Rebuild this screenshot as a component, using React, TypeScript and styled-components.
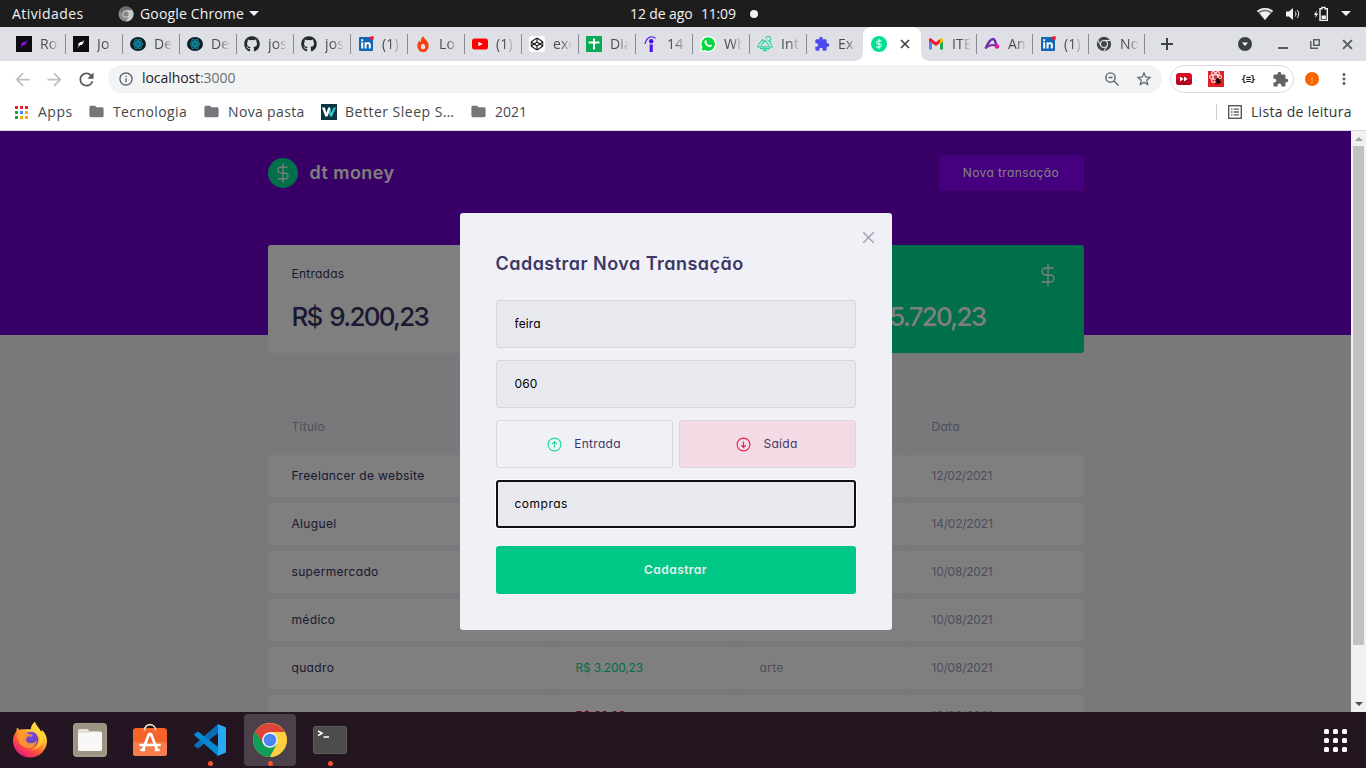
import React from 'react';
import styled, { createGlobalStyle, css } from 'styled-components';
import { FaGithub, FaCodepen } from 'react-icons/fa';
import {
  MdExtension,
  MdArrowBack,
  MdArrowForward,
  MdRefresh,
  MdInfoOutline,
  MdStarBorder,
  MdMoreVert,
  MdFolder,
} from 'react-icons/md';

const ubuntu = `'Open Sans', 'Noto Sans', sans-serif`;
const poppins = `Inter, 'Open Sans', sans-serif`;

const GlobalStyle = createGlobalStyle`
  * { margin: 0; padding: 0; box-sizing: border-box; }
  html, body, #root { height: 100%; overflow: hidden; }
  body { background: #fff; }
  svg { display: block; flex: none; }
  button, input { font: inherit; letter-spacing: inherit; border: 0; background: none; }
`;

const Desktop = styled.div`
  width: 1366px;
  height: 768px;
  display: flex;
  flex-direction: column;
  font-family: ${ubuntu};
  overflow: hidden;
`;

/* ---------- system bar ---------- */

const SystemBar = styled.header`
  height: 27px;
  flex: none;
  display: grid;
  grid-template-columns: 630px 1fr auto;
  align-items: center;
  background: #1d1d1d;
  color: #f2f2f2;
  font-size: 14px;
  line-height: 27px;
`;

const SystemGroup = styled.div<{ $gap?: number; $left?: number; $right?: number }>`
  display: flex;
  align-items: center;
  height: 27px;
  gap: ${(p) => p.$gap ?? 0}px;
  padding-left: ${(p) => p.$left ?? 0}px;
  padding-right: ${(p) => p.$right ?? 0}px;
`;

const Label = styled.span<{ $w: number; $ls?: number }>`
  width: ${(p) => p.$w}px;
  letter-spacing: ${(p) => p.$ls ?? 0}px;
  white-space: nowrap;
  flex: none;
`;

const Caret = styled.i`
  border: 5px solid transparent;
  border-top-color: #f2f2f2;
  border-bottom: 0;
`;

const NoticeDot = styled.i`
  width: 8px;
  height: 8px;
  border-radius: 50%;
  background: #f2f2f2;
  margin-left: 14px;
`;

/* ---------- tabs ---------- */

const TabStrip = styled.nav`
  height: 34px;
  flex: none;
  display: flex;
  align-items: center;
  padding-left: 9px;
  background: #dee0e6;
  color: #4a4c50;
  font-size: 14px;
`;

const TabItem = styled.div<{ $narrow?: boolean; $last?: boolean }>`
  width: ${(p) => (p.$narrow ? 56 : 57)}px;
  height: 20px;
  flex: none;
  display: flex;
  align-items: center;
  padding-left: 7px;
  border-right: 1px solid ${(p) => (p.$last ? 'transparent' : '#888a8f')};
`;

const TabTitle = styled.span`
  margin-left: 8px;
  width: 18px;
  overflow: hidden;
  white-space: nowrap;
  line-height: 20px;
  letter-spacing: 0.2px;
  mask-image: linear-gradient(90deg, #000 45%, transparent 105%);
`;

const flare = css`
  content: '';
  position: absolute;
  bottom: 0;
  width: 8px;
  height: 8px;
`;

const ActiveTab = styled.div`
  position: relative;
  width: 58px;
  height: 34px;
  margin-left: -1px;
  flex: none;
  display: flex;
  align-items: center;
  justify-content: space-between;
  padding: 0 11px 0 8px;
  background: #fff;
  border-radius: 8px 8px 0 0;
  &::before {
    ${flare}
    left: -8px;
    background: radial-gradient(circle at 0 0, transparent 7.5px, #fff 8px);
  }
  &::after {
    ${flare}
    right: -8px;
    background: radial-gradient(circle at 100% 0, transparent 7.5px, #fff 8px);
  }
`;

const WindowControls = styled.div`
  margin-left: auto;
  display: flex;
  align-items: center;
  padding-right: 13px;
  gap: 22px;
  svg:first-child {
    margin-right: 4px;
  }
`;

const NewTab = styled.div`
  margin-left: 16px;
`;

/* ---------- toolbar ---------- */

const Toolbar = styled.div`
  height: 36px;
  flex: none;
  display: flex;
  align-items: center;
  padding-left: 12px;
  background: #fff;
  color: #5f6368;
`;

const NavButtons = styled.div`
  display: flex;
  align-items: center;
  gap: 11px;
  width: 96px;
`;

const AddressBar = styled.div`
  width: 1054px;
  height: 28px;
  border-radius: 14px;
  background: #f1f3f4;
  display: flex;
  align-items: center;
  padding: 0 9px 0 10px;
`;

const Url = styled.span`
  margin-left: 8px;
  flex: 1;
  font-size: 14px;
  line-height: 26px;
  padding-bottom: 2px;
  letter-spacing: -0.07px;
  color: #6b6e73;
  b {
    font-weight: 400;
    color: #202124;
  }
`;

const Extensions = styled.div`
  margin-left: 8px;
  width: 124px;
  height: 28px;
  border: 1px solid #dadce0;
  border-radius: 14px;
  display: flex;
  align-items: center;
  justify-content: space-between;
  padding: 0 4px 0 5px;
`;

const CodeBadge = styled.span`
  width: 16px;
  text-align: center;
  font: bold 9px 'DejaVu Sans Mono', monospace;
  letter-spacing: -0.8px;
  color: #222;
`;

const Avatar = styled.span`
  margin-left: 11px;
  width: 14px;
  height: 14px;
  border-radius: 50%;
  background: #f96302;
  color: #ffd2b0;
  font-size: 8px;
  line-height: 13px;
  text-align: center;
`;

const MenuDots = styled.div`
  margin-left: 16px;
`;

/* ---------- bookmarks ---------- */

const Bookmarks = styled.div`
  height: 34px;
  flex: none;
  display: flex;
  align-items: center;
  padding: 0 14px 4px;
  background: #fff;
  border-bottom: 1px solid #d7d9dc;
  color: #45474b;
  font-size: 14px;
  line-height: 30px;
`;

const Bookmark = styled.div<{ $w: number; $gap: number }>`
  display: flex;
  align-items: center;
  width: ${(p) => p.$w}px;
  gap: ${(p) => p.$gap}px;
  flex: none;
  white-space: nowrap;
`;

const ReadingList = styled.div`
  margin-left: auto;
  display: flex;
  align-items: center;
  height: 16px;
  padding-left: 11px;
  gap: 9px;
  border-left: 1px solid #c9cbce;
  color: #333539;
`;

/* ---------- page ---------- */

const Viewport = styled.main`
  height: 581px;
  flex: none;
  display: flex;
  overflow: hidden;
`;

const Page = styled.div`
  position: relative;
  width: 1351px;
  height: 581px;
  overflow: hidden;
  background: #f0f2f5;
  font-family: ${poppins};
  font-feature-settings: 'cv11';
  font-size: 12px;
  color: #3c3865;
`;

const Hero = styled.header`
  height: 204px;
  background: #7000cc;
`;

const HeroInner = styled.div`
  width: 816px;
  margin: 0 auto;
  padding-top: 24px;
  display: flex;
  align-items: center;
  justify-content: space-between;
`;

const Brand = styled.div`
  display: flex;
  align-items: center;
  gap: 12px;
  color: #fff;
  font-size: 18px;
  line-height: 28px;
  font-weight: 600;
  letter-spacing: 0.45px;
`;

const BrandMark = styled.div`
  width: 30px;
  height: 30px;
  border-radius: 50%;
  display: grid;
  place-items: center;
  background: #00de94;
`;

const NewButton = styled.button`
  width: 145px;
  height: 36px;
  padding-bottom: 2px;
  border-radius: 3px;
  background: #8a00ff;
  color: #fff;
  letter-spacing: 0.38px;
`;

const Content = styled.section`
  width: 816px;
  margin: -90px auto 0;
  position: relative;
`;

const Summary = styled.div`
  display: grid;
  grid-template-columns: repeat(3, 1fr);
  gap: 24px;
`;

const Card = styled.article<{ $accent?: boolean }>`
  height: 108px;
  padding: 18px 24px;
  border-radius: 3px;
  background: ${(p) => (p.$accent ? '#00de94' : '#fff')};
  color: ${(p) => (p.$accent ? '#fff' : '#363165')};
`;

const CardHead = styled.header`
  height: 24px;
  display: flex;
  align-items: center;
  justify-content: space-between;
  line-height: 22px;
  letter-spacing: 0.24px;
  span {
    padding-bottom: 2px;
  }
`;

const CardValue = styled.strong`
  display: block;
  margin-top: 9px;
  font-size: 26px;
  line-height: 41px;
  font-weight: 500;
  letter-spacing: -1.75px;
  word-spacing: 2.5px;
  white-space: nowrap;
`;

const Table = styled.div`
  margin-top: 48px;
  display: flex;
  flex-direction: column;
  gap: 6px;
`;

const Row = styled.div<{ $head?: boolean }>`
  display: grid;
  grid-template-columns: 284px 184px 172px 176px;
  height: ${(p) => (p.$head ? 48 : 42)}px;
  color: #a09cb8;
`;

const Cell = styled.div<{ $tone?: 'title' | 'in' | 'out' | 'date'; $head?: boolean }>`
  display: flex;
  align-items: center;
  padding: ${(p) => (p.$head ? '3px 0 0 24px' : '0 0 2px 24px')};
  border-radius: 3px;
  background: ${(p) => (p.$head ? 'none' : '#fff')};
  letter-spacing: ${(p) => (p.$tone === 'title' ? 0.34 : p.$tone ? -0.22 : 0.3)}px;
  ${(p) => p.$tone === 'title' && 'color: #363165;'}
  ${(p) => p.$tone === 'in' && 'color: #00de94;'}
  ${(p) => p.$tone === 'out' && 'color: #e5004c;'}
`;

/* ---------- modal ---------- */

const Overlay = styled.div`
  position: absolute;
  inset: 0;
  display: flex;
  align-items: center;
  justify-content: center;
  background: rgba(0, 0, 0, 0.5);
`;

const Dialog = styled.form`
  position: relative;
  width: 432px;
  height: 417px;
  padding: 36px;
  border-radius: 3px;
  background: #f0f1f6;
  display: flex;
  flex-direction: column;
`;

const CloseButton = styled.button`
  position: absolute;
  right: 17px;
  top: 17.5px;
  color: #a09fae;
`;

const DialogTitle = styled.h2`
  height: 27px;
  margin-bottom: 24px;
  font-size: 18px;
  line-height: 29px;
  font-weight: 600;
  letter-spacing: 0.47px;
  white-space: nowrap;
`;

const Field = styled.input<{ $focused?: boolean; $ls?: number }>`
  height: 48px;
  flex: none;
  margin-bottom: ${(p) => (p.$focused ? 18 : 12)}px;
  padding: 0 ${(p) => (p.$focused ? 17 : 18)}px 2px;
  border-radius: 3px;
  border: ${(p) => (p.$focused ? '2px solid #101010' : '1px solid #d7d7d7')};
  box-shadow: ${(p) => (p.$focused ? '0 0 0 1px #fff' : 'none')};
  background: #e7e9ee;
  color: #000;
  outline: none;
  font-family: ${poppins};
  font-feature-settings: 'cv11';
  letter-spacing: ${(p) => p.$ls ?? 0.1}px;
`;

const TypeGroup = styled.div`
  display: grid;
  grid-template-columns: 1fr 1fr;
  gap: 6px;
  margin-bottom: 12px;
`;

const TypeButton = styled.button<{ $picked?: boolean }>`
  height: 48px;
  display: flex;
  align-items: center;
  justify-content: center;
  gap: 12px;
  border: 1px solid #d7d7d7;
  border-radius: 3px;
  background: ${(p) => (p.$picked ? '#f4dae4' : 'transparent')};
  color: #3c3865;
  letter-spacing: 0.3px;
  span {
    padding-bottom: 2px;
  }
`;

const Submit = styled.button`
  height: 48px;
  padding-bottom: 2px;
  border-radius: 3px;
  background: #00c785;
  color: #e4f0ec;
  font-weight: 600;
  letter-spacing: 0.45px;
`;

/* ---------- scrollbar ---------- */

const Scrollbar = styled.div`
  width: 15px;
  background: #f1f1f1;
  display: flex;
  flex-direction: column;
  align-items: center;
`;

const ScrollArrow = styled.i<{ $up?: boolean }>`
  width: 0;
  margin: ${(p) => (p.$up ? '6px 0 5px' : 'auto 0 6px')};
  border: 4px solid transparent;
  ${(p) =>
    p.$up
      ? 'border-top: 0; border-bottom-color: #a3a3a3;'
      : 'border-bottom: 0; border-top-color: #505050;'}
`;

const Thumb = styled.div`
  width: 11px;
  height: 499px;
  background: #c1c1c1;
`;

/* ---------- dock ---------- */

const DockBar = styled.footer`
  height: 56px;
  flex: none;
  display: flex;
  align-items: center;
  gap: 8px;
  padding: 0 15px 0 4px;
  background: linear-gradient(90deg, #231521, #22151f);
`;

const DockItem = styled.div<{ $active?: boolean; $running?: boolean }>`
  position: relative;
  width: 52px;
  height: 52px;
  border-radius: 4px;
  display: grid;
  place-items: center;
  background: ${(p) => (p.$active ? '#4c404a' : 'transparent')};
  ${(p) =>
    p.$running &&
    `&::after {
      content: '';
      position: absolute;
      left: 23.5px;
      bottom: 0;
      width: 5px;
      height: 5px;
      border-radius: 50%;
      background: #f1562a;
    }`}
`;

const AppGrid = styled.div`
  margin-left: auto;
  display: grid;
  grid-template-columns: repeat(3, 5px);
  gap: 4px;
  padding-right: 4px;
  i {
    width: 5px;
    height: 5px;
    border-radius: 1.5px;
    background: #fff;
  }
`;

/* ---------- icons ---------- */

const Dollar = ({ size, width = 1.3 }: { size: number; width?: number }) => (
  <svg width={size} height={size} viewBox="0 0 24 24" fill="none" stroke="#fff" strokeWidth={width} strokeLinecap="round">
    <path d="M12 1v22M17 5H9.500a3.500 3.500 0 0 0 0 7h5a3.500 3.500 0 0 1 0 7H6" />
  </svg>
);

const MoneyFavicon = () => (
  <svg width="16" height="16" viewBox="0 0 16 16">
    <circle cx="8" cy="8" r="8" fill="#00de94" />
    <path d="M8 2.800v10.400M10.800 5H7a1.500 1.500 0 0 0 0 3h2a1.500 1.500 0 0 1 0 3H5.200" fill="none" stroke="#fff" strokeWidth="1" />
  </svg>
);

const Rocket = ({ color }: { color: string }) => (
  <svg width="16" height="16" viewBox="0 0 16 16">
    <rect width="16" height="16" fill="#0e0c12" />
    <path d="M11.500 4 10 7.600 8.300 9.300 7.400 9 4 12.600 5.900 9.200 4.800 8 7.500 6l2-.3z" fill={color} />
  </svg>
);

const ReactDisc = () => (
  <svg width="16" height="16" viewBox="0 0 16 16">
    <ellipse cx="8" cy="8" rx="8" ry="7" fill="#131b21" />
    <g fill="none" stroke="#0e8fa6" strokeWidth="1">
      <ellipse cx="8" cy="8" rx="5" ry="2" />
      <ellipse cx="8" cy="8" rx="5" ry="2" transform="rotate(60 8 8)" />
      <ellipse cx="8" cy="8" rx="5" ry="2" transform="rotate(120 8 8)" />
    </g>
    <circle cx="8" cy="8" r="3.800" fill="#087f95" opacity=".7" />
  </svg>
);

const LinkedIn = () => (
  <svg width="16" height="16" viewBox="0 0 16 16">
    <rect x="1" y="1" width="14" height="14" rx="1" fill="#1266b3" />
    <path d="M3.200 6.300h2v6.200h-2zM3.200 3.300h2v1.900h-2zM6.600 6.300h1.900v.9c.4-.6 1-1 2-1 1.700 0 2.300 1.100 2.300 2.800v3.500h-2V9.400c0-.9-.2-1.500-1-1.500s-1.200.6-1.200 1.500v3.100h-2z" fill="#fff" />
    <circle cx="14" cy="2" r="2" fill="#ff1633" />
  </svg>
);

const Flame = () => (
  <svg width="16" height="16" viewBox="0 0 16 16">
    <path
      fillRule="evenodd"
      d="M8.300 0c.2 2 1.400 2.900 3 4.300C12.800 5.700 13.600 7.500 13.600 9.700A5.600 5.900 0 0 1 8 16a5.600 5.900 0 0 1-5.600-6.300c0-2.300 1-4 2.200-5.200.1 1 .5 1.700 1.100 2C5.700 4 6.300 1.500 8.300 0ZM8 7.600c-1.500 1-2.300 2-2.300 3.400A2.300 2.400 0 0 0 8 13.400 2.300 2.400 0 0 0 10.300 11C10.300 9.600 9.500 8.600 8 7.600Z"
      fill="#fb3c0c"
    />
  </svg>
);

const YouTube = () => (
  <svg width="16" height="16" viewBox="0 0 16 16">
    <rect y="2.500" width="16" height="11" rx="2.500" fill="#f00" />
    <path d="M6.400 5.700v4.600L10.600 8z" fill="#fff" />
  </svg>
);

const CodePen = () => (
  <svg width="16" height="16" viewBox="0 0 16 16">
    <rect width="16" height="16" rx="2" fill="#fff" />
    <FaCodepen x="1.500" y="1.500" width="13" height="13" size={13} color="#111" />
  </svg>
);

const Sheet = () => (
  <svg width="16" height="16" viewBox="0 0 16 16">
    <rect width="16" height="16" rx="1" fill="#06ab52" />
    <path d="M7 2.500h2v3h4.500v2H9V13.500H7V7.500H2.500v-2H7z" fill="#fff" />
  </svg>
);

const Indeed = () => (
  <svg width="16" height="16" viewBox="0 0 16 16">
    <circle cx="8.200" cy="5.200" r="2.200" fill="#4a0cf0" />
    <path d="M6.700 8.200c1 .5 2 .4 3-.2V16h-3z" fill="#4a0cf0" />
    <path d="M2 8C3 2 8.500-1.500 12.600 2.400" fill="none" stroke="#4a0cf0" strokeWidth="1.100" />
  </svg>
);

const WhatsApp = () => (
  <svg width="16" height="16" viewBox="0 0 16 16">
    <path d="M8 0a8 8 0 1 1-3.800 15L0 16l1.200-4A8 8 0 0 1 8 0z" fill="#fff" />
    <path d="M8 1.200a6.800 6.800 0 1 1-3.300 12.700L1.600 14.600l.9-3A6.800 6.800 0 0 1 8 1.200z" fill="#00d83d" />
    <path d="M5.500 4.200c.6-.3.900.1 1.300 1.300.2.600-.6.900-.4 1.300.7 1.200 1.500 1.900 2.700 2.400.5.100.8-.9 1.200-.8 1.500.7 1.800.8 1.600 1.400-.5 1.400-1.700 1.600-3.100 1.100C6.600 10 5 8.300 4.500 6.700c-.3-1 .2-2.200 1-2.500z" fill="#fff" />
  </svg>
);

const Mountain = () => (
  <svg width="16" height="16" viewBox="0 0 16 16" fill="none" stroke="#27d19c" strokeWidth="1.100">
    <path d="M.8 9.500 5.500 3.700l2 2.600M4 9.500l4-5 4 5M8.700 2.500a2.600 2.600 0 1 1 3.800 2.800L15 9.500M10.500 3.500l1.200 2" />
    <path d="M0 10.800h16M3 12.700h10M6 14.500h4" strokeWidth="1.300" />
  </svg>
);

const Gmail = () => (
  <svg width="16" height="16" viewBox="0 0 16 16">
    <path d="M1 5v8.500h3V7z" fill="#4a86f5" />
    <path d="M15 5v8.500h-3V7z" fill="#20a758" />
    <path d="M1 5V3.500C1 2 2.500 2 3.500 2.700L8 6.200l4.200-3.400L13 6 8 10 1 5z" fill="#ef1a2d" />
    <path d="M12 3l.8-.5c1-.6 2.200-.2 2.200 1V5.400l-3 2.500z" fill="#fbbc04" />
  </svg>
);

const Arc = () => (
  <svg width="16" height="16" viewBox="0 0 16 16" fill="none">
    <path d="M1.500 12.500C4 7 6.500 3 9 3c2 0 2.500 3.500 3.500 6.500" stroke="#6b2bb0" strokeWidth="2.400" />
    <path d="M1.500 12.300C4.500 9 9 8 12 10" stroke="#7a2bb0" strokeWidth="2" />
    <circle cx="13" cy="10.500" r="2.300" fill="#f0149a" />
  </svg>
);

const ChromeMono = ({ size, color, hole }: { size: number; color: string; hole: string }) => (
  <svg width={size} height={size} viewBox="0 0 16 16">
    <circle cx="8" cy="8" r="7.200" fill={color} />
    <circle cx="8" cy="8" r="3.500" fill="none" stroke={hole} strokeWidth="1.100" />
    <path d="M8 4.500h6.500M5 9.700 1.900 4.300M11 9.700 7.900 15" stroke={hole} strokeWidth="1.100" />
  </svg>
);

const ChromeTray = () => (
  <svg width="16" height="16" viewBox="0 0 16 16">
    <circle cx="8" cy="8" r="7.500" fill="#8b8b8b" />
    <path d="M1.500 4.250A7.500 7.500 0 0 1 14.500 4.250H8L5 9.700z" fill="#6f6f6f" />
    <path d="M8 4.250h6.500A7.500 7.500 0 0 1 8 15.500l3.200-5.700z" fill="#c9c9c9" />
    <circle cx="8" cy="8" r="3.600" fill="#e4e4e4" />
    <circle cx="8" cy="8" r="2.800" fill="#868686" />
  </svg>
);

const Plus = () => (
  <svg width="12" height="12" viewBox="0 0 12 12" stroke="#3c4043" strokeWidth="2">
    <path d="M6 0v12M0 6h12" />
  </svg>
);

const Cross = ({ size, color, width }: { size: number; color: string; width: number }) => (
  <svg width={size} height={size} viewBox="0 0 10 10" stroke={color} strokeWidth={width}>
    <path d="m1 1 8 8M9 1 1 9" />
  </svg>
);

const TabSearch = () => (
  <svg width="14" height="14" viewBox="0 0 14 14">
    <circle cx="7" cy="7" r="7" fill="#3c4043" />
    <path d="M4 5.500h6L7 9z" fill="#fff" />
  </svg>
);

const Minimize = () => (
  <svg width="10" height="10" viewBox="0 0 10 10">
    <path d="M0 8h10v2H0z" fill="#5b5e63" />
  </svg>
);

const Restore = () => (
  <svg width="10" height="10" viewBox="0 0 10 10" fill="none" stroke="#5b5e63" strokeWidth="1.500">
    <path d="M3.750.750h5.500v5.500h-5.500zM.750 2v7.250H8" />
  </svg>
);

const ZoomOut = () => (
  <svg width="16" height="16" viewBox="0 0 16 16" fill="none" stroke="#5f6368" strokeWidth="1.400">
    <circle cx="6.500" cy="6.500" r="4.600" />
    <path d="m10 10 4.500 4.500M4.500 6.500h4" />
  </svg>
);

const FastForward = () => (
  <svg width="16" height="14" viewBox="0 0 16 14">
    <rect y="1" width="16" height="12" rx="3" fill="#d50f26" />
    <rect y="7" width="16" height="6" rx="3" fill="#b3081c" />
    <path d="M4 4.500v5L7.600 7zM8 4.500v5L11.600 7z" fill="#fff" />
  </svg>
);

const Bug = () => (
  <svg width="16" height="16" viewBox="0 0 16 16">
    <rect width="16" height="16" fill="#e0232b" />
    <g fill="none" stroke="#ffd9d9" strokeWidth="1.100">
      <ellipse cx="7.500" cy="6" rx="6" ry="2.400" />
      <ellipse cx="7.500" cy="6" rx="6" ry="2.400" transform="rotate(60 7.500 6)" />
      <ellipse cx="7.500" cy="6" rx="6" ry="2.400" transform="rotate(120 7.500 6)" />
    </g>
    <ellipse cx="10" cy="10" rx="2.200" ry="3" transform="rotate(-30 10 10)" fill="#20090b" />
    <path d="m6.500 9 7 3M7 13l6-5M9 14l1.500-7" stroke="#20090b" strokeWidth=".7" />
  </svg>
);

const Apps = () => {
  const colors = ['#ea1f2d', '#ea1f2d', '#ea1f2d', '#1ca04c', '#4285f4', '#f9ab00', '#1ca04c', '#f9ab00', '#f9ab00'];
  return (
    <svg width="14" height="14" viewBox="0 0 14 14">
      {colors.map((c, i) => (
        <rect key={i} x={1 + (i % 3) * 5} y={1 + Math.floor(i / 3) * 5} width="3" height="3" fill={c} />
      ))}
    </svg>
  );
};

const WIcon = () => (
  <svg width="16" height="16" viewBox="0 0 16 16">
    <rect width="16" height="16" fill="#0b3640" />
    <path d="M1 3.500h2.800L5.400 9l1.800-5.500h2.200L9 6l-2.500 6.500H4.300z" fill="#fff" />
    <path d="M9.400 3.500 8 9l1 3.500h2L15 3.500h-2.600L10.300 9z" fill="#35c6d0" />
  </svg>
);

const ListIcon = () => (
  <svg width="14" height="14" viewBox="0 0 14 14" fill="none" stroke="#55585d" strokeWidth="1.400">
    <rect x=".7" y=".7" width="12.600" height="12.600" />
    <path d="M3 4.200h1.500M5.700 4.200H11M3 7h1.500M5.700 7H11M3 9.800h1.500M5.700 9.800H11" strokeWidth="1.300" />
  </svg>
);

const Wifi = () => (
  <svg width="16" height="12" viewBox="0 0 16 12" fill="#f2f2f2">
    <path d="M8 0c3.200 0 6 1.200 8 3l-8 9-8-9c2-1.800 4.800-3 8-3z" opacity=".45" />
    <path d="M8 3.400c2 0 3.900.6 5.400 1.900L8 12 2.600 5.300C4.100 4 6 3.400 8 3.400z" />
    <path d="M0 3c4.500-4 11.500-4 16 0l-1 1.200c-4-3.500-10-3.500-14 0z" />
  </svg>
);

const Volume = () => (
  <svg width="16" height="14" viewBox="0 0 16 14" fill="#f2f2f2">
    <path d="M1 4.500h3L8 1v12L4 9.500H1z" />
    <path d="M10 4.500c1.300 1.500 1.300 3.500 0 5M12 3c2.300 2.300 2.300 5.700 0 8" fill="none" stroke="#f2f2f2" strokeWidth="1" />
  </svg>
);

const Battery = () => (
  <svg width="16" height="16" viewBox="0 0 16 16">
    <path d="M3.800 4.500.8 9h2L2.300 12l3-4.500h-2z" fill="#f2f2f2" />
    <path d="M7 2.800h2V1.400h3v1.400h2.300v11.600H7z" fill="none" stroke="#f2f2f2" strokeWidth="1.400" />
    <path d="M8.500 9.500h4.400v3.500H8.500z" fill="#f2f2f2" />
  </svg>
);

const ArrowCircle = ({ down }: { down?: boolean }) => (
  <svg width="15" height="15" viewBox="0 0 15 15" fill="none" stroke={down ? '#e5204f' : '#12dc98'} strokeWidth="1.100">
    <circle cx="7.500" cy="7.500" r="6.400" />
    {down ? <path d="M7.500 4.500v6M5.200 8.200l2.300 2.300 2.300-2.300" /> : <path d="M7.500 10.500v-6M5.200 6.800l2.300-2.300 2.300 2.300" />}
  </svg>
);

const Firefox = () => (
  <svg width="36" height="36" viewBox="0 0 36 36">
    <defs>
      <linearGradient id="ffBody" x1="28" y1="3" x2="8" y2="33" gradientUnits="userSpaceOnUse">
        <stop offset="0" stopColor="#fff04a" />
        <stop offset=".35" stopColor="#ffb52e" />
        <stop offset=".65" stopColor="#ff5a34" />
        <stop offset="1" stopColor="#e8177f" />
      </linearGradient>
      <radialGradient id="ffGlobe" cx="20" cy="14" r="9" gradientUnits="userSpaceOnUse">
        <stop offset="0" stopColor="#9059e8" />
        <stop offset="1" stopColor="#5a36b4" />
      </radialGradient>
    </defs>
    <path d="M23 0c1 4 5 6 6 10l1-2c3 3 5 6.500 5 11a17 16.500 0 0 1-34 0c0-5 2-8 3.500-10l.3-3.500c1 .5 2 1.500 2.400 2.300 1.400-.5 3-.7 4.500-.4C14 7 17 7.500 19 7c0-2.500 2-6 4-7z" fill="url(#ffBody)" />
    <circle cx="18.500" cy="17.500" r="7.800" fill="url(#ffGlobe)" />
    <path d="M5 14c2-4 6-6 8-5 2 3 5 3.500 7 4-.5 2-3 2-5 3-2 2 0 5 3 5 4 0 6-1 7-4-.2 6-4 9.500-9 9C9 25 6 20 5 14z" fill="#ff9a2c" opacity=".9" />
    <path d="M19 17c0-2-1.500-3-3-2.500-1.500 1-2 3-1 5 1 1.500 3 2 5 1.500 3-.5 5-2 5.200-5 .2-3-2.200-5.500-5.200-6 1.500 2 1.500 5-1 7z" fill="#6f43cf" />
    <path d="M19 7c4 0 8 4 8.500 9 .5 6-4 11-9 12 8 0 14-6 12.500-14C30 10 26 7 23 0c-2 1-4 4.500-4 7z" fill="#ffd43c" opacity=".75" />
  </svg>
);

const Files = () => (
  <svg width="34" height="34" viewBox="0 0 34 34">
    <rect width="34" height="34" rx="4" fill="#a39c8a" />
    <rect x="1" y="1" width="32" height="31" rx="3.500" fill="#9c9583" />
    <path d="M5 8c0-1.300.7-2 2-2h7c1.500 0 1.800 2.500 3 2.500h10c1.300 0 2 .7 2 2V26c0 1.300-.7 2-2 2H7c-1.300 0-2-.7-2-2z" fill="#e6e1d8" />
    <path d="M5 11.500c0-1 .7-1.500 1.700-1.500h9c1 0 1.500-1.200 2.700-1.200H27c1.300 0 2 .7 2 2V26c0 1.300-.7 2-2 2H7c-1.300 0-2-.7-2-2z" fill="#f9f8f6" />
  </svg>
);

const Software = () => (
  <svg width="34" height="36" viewBox="0 0 34 36">
    <rect y="6" width="34" height="28" rx="3" fill="#f5622a" />
    <path d="M0 20h34v11a3 3 0 0 1-3 3H3a3 3 0 0 1-3-3z" fill="#f57e4c" />
    <path d="M11.500 8.500C11.500.700 22.500.700 22.500 8.500" fill="none" stroke="#f3dfb9" strokeWidth="1.600" />
    <path d="m10 27.500 6-15.500h2l6 15.500M7.500 23h19M8.500 28H11M23 28h2.500" fill="none" stroke="#fff" strokeWidth="2.700" strokeLinecap="round" strokeLinejoin="round" />
  </svg>
);

const VSCode = () => (
  <svg width="32" height="32" viewBox="0 0 32 32">
    <path d="M.5 22.200 3 24.100c.6.400 1.200.4 1.800-.1L24 9V0L.6 20.400c-.6.600-.7 1.300-.1 1.800z" fill="#0b6eb5" />
    <path d="M.5 9.800 3 7.900c.6-.4 1.200-.4 1.800.1L24 23v9L.6 11.600c-.6-.6-.7-1.300-.1-1.800z" fill="#0489d4" />
    <path d="M23.500 0 31 3c.6.300 1 .8 1 1.500v23c0 .7-.4 1.200-1 1.500L23.500 32c-.5.200-1 0-1.300-.3.900.7 1.800.2 1.800-.9V1.200c0-1.100-.9-1.600-1.800-.9.400-.4.800-.5 1.300-.3z" fill="#2aa9f3" />
  </svg>
);

const Chrome = () => (
  <svg width="34" height="34" viewBox="0 0 34 34">
    <circle cx="17" cy="17" r="17" fill="#fdd03f" />
    <path d="M17 17 2.300 8.500A17 17 0 0 0 17 34l7-13z" fill="#0f9d58" />
    <path d="M2.300 8.500A17 17 0 0 1 31.700 9H17L10 20z" fill="#db4437" />
    <path d="M17 9h14.700A17 17 0 0 1 17 34l7-13z" fill="#fdd03f" />
    <circle cx="17" cy="17" r="7.800" fill="#f4f4f4" />
    <circle cx="17" cy="17" r="6.300" fill="#4a86f0" />
  </svg>
);

const Terminal = () => (
  <svg width="34" height="28" viewBox="0 0 34 28">
    <rect width="34" height="28" rx="3" fill="#5d5d5b" />
    <rect x="1" y="1" width="32" height="26" rx="2" fill="#4b4c4b" />
    <path d="m5 5 4 2.300L5 9.500M10.500 11H16" fill="none" stroke="#fff" strokeWidth="1.500" />
  </svg>
);

/* ---------- data ---------- */

const leftTabs: [React.ReactNode, string][] = [
  [<Rocket color="#8a10f0" />, 'Ro'],
  [<Rocket color="#fff" />, 'Jo'],
  [<ReactDisc />, 'De'],
  [<ReactDisc />, 'De'],
  [<FaGithub size={16} color="#24292e" />, 'jos'],
  [<FaGithub size={16} color="#24292e" />, 'jos'],
  [<LinkedIn />, '(1)'],
  [<Flame />, 'Lo'],
  [<YouTube />, '(1)'],
  [<CodePen />, 'exe'],
  [<Sheet />, 'Dia'],
  [<Indeed />, '14:'],
  [<WhatsApp />, 'Wh'],
  [<Mountain />, 'Int'],
  [<MdExtension size={16} color="#4a4cf0" />, 'Ex'],
];

const rightTabs: [React.ReactNode, string][] = [
  [<Gmail />, 'ITE'],
  [<Arc />, 'An'],
  [<LinkedIn />, '(1)'],
  [<ChromeMono size={16} color="#43464b" hole="#dee0e6" />, 'No'],
];

type Entry = { title: string; value: string; out?: boolean; category: string; date: string };

const entries: Entry[] = [
  { title: 'Freelancer de website', value: 'R$ 6.000,00', category: 'Dev', date: '12/02/2021' },
  { title: 'Aluguel', value: 'R$ 1.100,00', out: true, category: 'Casa', date: '14/02/2021' },
  { title: 'supermercado', value: 'R$ 320,00', out: true, category: 'compras', date: '10/08/2021' },
  { title: 'médico', value: 'R$ 2.000,00', out: true, category: 'saúde', date: '10/08/2021' },
  { title: 'quadro', value: 'R$ 3.200,23', category: 'arte', date: '10/08/2021' },
  { title: 'compras', value: 'R$ 60,00', out: true, category: 'casa', date: '10/08/2021' },
];

/* ---------- app ---------- */

export default function App() {
  return (
    <Desktop>
      <GlobalStyle />
      <SystemBar>
        <SystemGroup $left={12}>
          <Label $w={106} $ls={0.42}>Atividades</Label>
          <ChromeTray />
          <SystemGroup $left={6}>
            <Label $w={109} $ls={0.15}>Google Chrome</Label>
          </SystemGroup>
          <Caret />
        </SystemGroup>
        <SystemGroup>
          <Label $w={71} $ls={-0.1}>12 de ago</Label>
          <Label $w={35} $ls={-0.2}>11:09</Label>
          <NoticeDot />
        </SystemGroup>
        <SystemGroup $gap={12} $right={15}>
          <SystemGroup $gap={12} $right={-2}>
            <Wifi />
            <Volume />
            <Battery />
          </SystemGroup>
          <Caret />
        </SystemGroup>
      </SystemBar>

      <TabStrip>
        {leftTabs.map(([icon, title], i) => (
          <TabItem key={i} $last={i === leftTabs.length - 1}>
            {icon}
            <TabTitle>{title}</TabTitle>
          </TabItem>
        ))}
        <ActiveTab>
          <MoneyFavicon />
          <Cross size={10} color="#3c4043" width={1.7} />
        </ActiveTab>
        {rightTabs.map(([icon, title], i) => (
          <TabItem key={i} $narrow>
            {icon}
            <TabTitle>{title}</TabTitle>
          </TabItem>
        ))}
        <NewTab>
          <Plus />
        </NewTab>
        <WindowControls>
          <TabSearch />
          <Minimize />
          <Restore />
          <Cross size={11} color="#5b5e63" width={1.8} />
        </WindowControls>
      </TabStrip>

      <Toolbar>
        <NavButtons>
          <MdArrowBack size={21} color="#bcbec2" />
          <MdArrowForward size={21} color="#bcbec2" />
          <MdRefresh size={21} color="#55585d" />
        </NavButtons>
        <AddressBar>
          <MdInfoOutline size={16} color="#5f6368" />
          <Url>
            <b>localhost</b>:3000
          </Url>
          <ZoomOut />
          <SystemGroup $left={15}>
            <MdStarBorder size={18} color="#5f6368" />
          </SystemGroup>
        </AddressBar>
        <Extensions>
          <FastForward />
          <Bug />
          <CodeBadge>{'{≡}'}</CodeBadge>
          <MdExtension size={17} color="#5f6368" />
        </Extensions>
        <Avatar>J</Avatar>
        <MenuDots>
          <MdMoreVert size={18} color="#5f6368" />
        </MenuDots>
      </Toolbar>

      <Bookmarks>
        <Bookmark $w={74} $gap={10}>
          <Apps />
          <Label $w={40} $ls={0.5}>Apps</Label>
        </Bookmark>
        <Bookmark $w={115} $gap={8}>
          <MdFolder size={17} color="#74787c" />
          <Label $w={80} $ls={0.4}>Tecnologia</Label>
        </Bookmark>
        <Bookmark $w={118} $gap={8}>
          <MdFolder size={17} color="#74787c" />
          <Label $w={80} $ls={0.35}>Nova pasta</Label>
        </Bookmark>
        <Bookmark $w={149} $gap={8}>
          <WIcon />
          <Label $w={115} $ls={0.5}>Better Sleep S…</Label>
        </Bookmark>
        <Bookmark $w={60} $gap={8}>
          <MdFolder size={17} color="#74787c" />
          <Label $w={36}>2021</Label>
        </Bookmark>
        <ReadingList>
          <ListIcon />
          <Label $w={101} $ls={0.3}>Lista de leitura</Label>
        </ReadingList>
      </Bookmarks>

      <Viewport>
        <Page>
          <Hero>
            <HeroInner>
              <Brand>
                <BrandMark>
                  <Dollar size={20} width={1.500} />
                </BrandMark>
                dt money
              </Brand>
              <NewButton>Nova transação</NewButton>
            </HeroInner>
          </Hero>
          <Content>
            <Summary>
              <Card>
                <CardHead>
                  <span>Entradas</span>
                </CardHead>
                <CardValue>R$ 9.200,23</CardValue>
              </Card>
              <Card>
                <CardHead>
                  <span>Saídas</span>
                </CardHead>
                <CardValue>R$ 3.480,00</CardValue>
              </Card>
              <Card $accent>
                <CardHead>
                  <span>Total</span>
                  <Dollar size={24} />
                </CardHead>
                <CardValue>R$ 5.720,23</CardValue>
              </Card>
            </Summary>
            <Table>
              <Row $head>
                <Cell $head>Título</Cell>
                <Cell $head>Valor</Cell>
                <Cell $head>Categoria</Cell>
                <Cell $head>Data</Cell>
              </Row>
              {entries.map((e, i) => (
                <Row key={i}>
                  <Cell $tone="title">{e.title}</Cell>
                  <Cell $tone={e.out ? 'out' : 'in'}>{e.value}</Cell>
                  <Cell>{e.category}</Cell>
                  <Cell $tone="date">{e.date}</Cell>
                </Row>
              ))}
            </Table>
          </Content>

          <Overlay>
            <Dialog>
              <CloseButton type="button">
                <Cross size={13} color="currentColor" width={1.1} />
              </CloseButton>
              <DialogTitle>Cadastrar Nova Transação</DialogTitle>
              <Field defaultValue="feira" />
              <Field defaultValue="060" />
              <TypeGroup>
                <TypeButton type="button">
                  <ArrowCircle />
                  <span>Entrada</span>
                </TypeButton>
                <TypeButton type="button" $picked>
                  <ArrowCircle down />
                  <span>Saída</span>
                </TypeButton>
              </TypeGroup>
              <Field $focused $ls={0.5} defaultValue="compras" />
              <Submit type="button">Cadastrar</Submit>
            </Dialog>
          </Overlay>
        </Page>
        <Scrollbar>
          <ScrollArrow $up />
          <Thumb />
          <ScrollArrow />
        </Scrollbar>
      </Viewport>

      <DockBar>
        <DockItem><Firefox /></DockItem>
        <DockItem><Files /></DockItem>
        <DockItem><Software /></DockItem>
        <DockItem $running><VSCode /></DockItem>
        <DockItem $active $running><Chrome /></DockItem>
        <DockItem $running><Terminal /></DockItem>
        <AppGrid>
          {Array.from({ length: 9 }, (_, i) => (
            <i key={i} />
          ))}
        </AppGrid>
      </DockBar>
    </Desktop>
  );
}
